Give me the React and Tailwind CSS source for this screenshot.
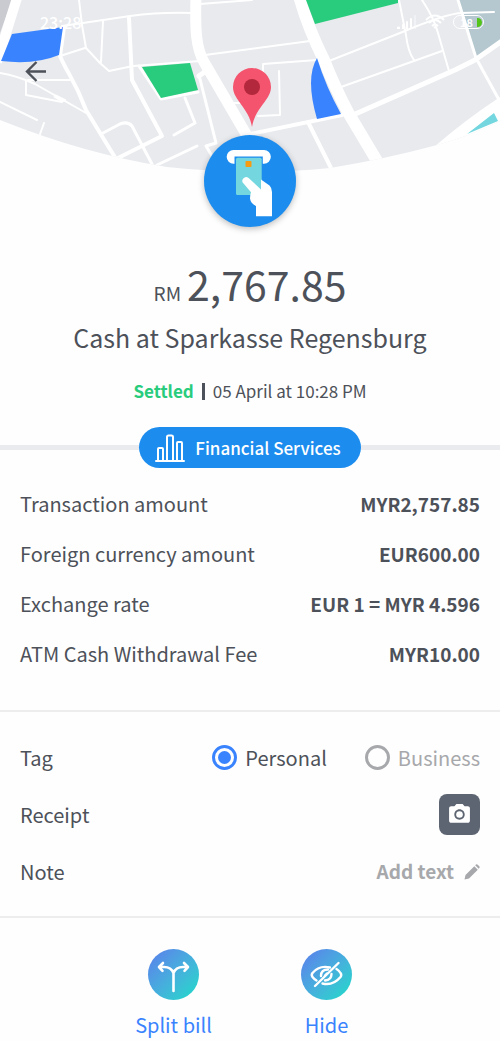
import { MdPhotoCamera } from "react-icons/md";

const details = [
  ["Transaction amount", "MYR2,757.85"],
  ["Foreign currency amount", "EUR600.00"],
  ["Exchange rate", "EUR 1 = MYR 4.596"],
  ["ATM Cash Withdrawal Fee", "MYR10.00"],
];

function MapBackdrop() {
  return (
    <svg viewBox="0 0 500 175" preserveAspectRatio="xMidYMin slice" className="absolute inset-x-0 top-0 h-[175px] w-full" aria-hidden="true">
      <defs>
        <clipPath id="mapEdge">
          <path d="M0 0H500V121Q470 136 437 145Q385 159 330 168Q250 176 167 167Q85 154 0 120Z" />
        </clipPath>
      </defs>
      <g clipPath="url(#mapEdge)">
        <path d="M0 0H500V175H0Z" fill="#e8eaee" />
        <path d="M0 0H12L0 33Z" fill="#c9cbd0" />
        <path d="M458 0H500V42L476 58Z" fill="#b5c7cf" />
        <g fill="none" stroke="#fff" strokeLinejoin="round" strokeLinecap="round">
          <path d="M17 -2L7 30L-3 62" strokeWidth="10" strokeLinecap="butt" />
          <g strokeWidth="2">
            <path d="M79 0L82 25L86 48L100 63L109 71L133 66L200 61" />
            <path d="M62 26L83 23L130 16Q160 12 192 13" />
            <path d="M103 21L101 62" />
            <path d="M60 56L85 48" />
            <path d="M0 73Q18 76 35 84L86 113" />
            <path d="M26 81V95L62 102M28 80L70 80" />
            <path d="M0 102L37 120M44 123L39 137" />
            <path d="M200 4L252 0M205 55L310 41" />
            <path d="M232 103H245M317 60L263 64V82M279 71L280 115L258 116" />
            <path d="M399 0L406 35Q408 52 414 60" />
            <path d="M422 0Q434 18 438 33L449 71" />
            <path d="M329 61L400 33Q445 14 461 13L494 12M341 87L442 51" />
          </g>
          <g strokeWidth="3">
            <path d="M103 133L120 124Q128 121 132 126L153 166M157 165L197 146" />
            <path d="M139 66L161 99L198 92M185 98L195 123L174 135" />
            <path d="M199 75L216 143L206 146L212 156" />
            <path d="M458 0L476 58L498 98" />
          </g>
          <path d="M54 97L62 102L66 100L56 95Z" fill="#fff" strokeWidth="1" />
          <path d="M129 18L132 80L162 136L116 159" strokeWidth="4" />
          <path d="M64 27L60 56C68 75 74 78 86 110L116 159" strokeWidth="4" />
          <path d="M250 134L342 115M309 124L332 170" strokeWidth="4" />
          <path d="M353 115L455 70L475 60L502 41" strokeWidth="5" />
          <path d="M196 -4C195 30 196 48 204 62L246 134" strokeWidth="11" />
          <path d="M199 76L206 71" strokeWidth="5" />
          <path d="M299 -4Q308 28 324 60Q336 90 349 114L380 166" strokeWidth="12" />
        </g>
        <path d="M12 34L63 27L59 55Q35 65 1 61Z" fill="#3a83ff" />
        <path d="M142 67L190 63L198 90L161 98Z" fill="#28cc7c" />
        <path d="M306 0H398V3L315 24Z" fill="#28cc7c" />
        <path d="M317 58Q326 87 341 114L317 119Q305 78 317 58Z" fill="#3a83ff" />
        <path d="M434 147Q465 120 500 97V122L437 152Z" fill="#fff" />
        <path d="M467 134L494 113L498 121Z" fill="#74d7df" />
      </g>
      <path d="M252 127C249 108 233 100 233 87A19 19 0 0 1 271 87C271 100 255 108 252 127Z" fill="#f4546d" />
      <circle cx="252" cy="87" r="8" fill="#b3283c" />
    </svg>
  );
}

function AtmIcon() {
  return (
    <svg viewBox="0 0 92 92" className="size-[92px]" aria-hidden="true">
      <path d="M29.5 15H60A6.8 6.8 0 0 1 60 28.7H29.5A6.8 6.8 0 0 1 29.5 15Z" fill="#fff" />
      <path d="M30.5 21.5H58.8V29H30.5Z" fill="#1c8def" />
      <rect x="32" y="22.7" width="25.7" height="37.3" rx="1.5" fill="#74d7df" />
      <rect x="41.5" y="26" width="6" height="6" rx="0.8" fill="#f79b13" />
      <path d="M39.8 48.8A3.7 3.7 0 0 1 44.6 43L57 54.5V44.5L65.5 50.5Q68 53 68 57V81.3H52V71Q46.5 68 46 63.5Q46 60 47 57.3Z" fill="#fff" />
    </svg>
  );
}

function BarsIcon() {
  return (
    <svg viewBox="0 0 30 30" className="h-[30px] w-[30px]" fill="none" stroke="#fff" strokeWidth="2" strokeLinecap="round" strokeLinejoin="round" aria-hidden="true">
      <path d="M1 28H29M3 28V16Q3 15 4 15H7Q8 15 8 16V28M12 28V4Q12 2.500 13.500 2.500H16.500Q18 2.500 18 4V28M22 28V10Q22 9 23 9H26Q27 9 27 10V28" />
    </svg>
  );
}

function SplitIcon() {
  return (
    <svg viewBox="0 0 51 51" className="size-[51px]" fill="none" stroke="#fff" strokeWidth="2.6" strokeLinecap="round" strokeLinejoin="round" aria-hidden="true">
      <path d="M25.500 42V24C24 20 20.500 18 16 18H11.500M25.500 24C27 20 30.500 18 35 18H39.500M15 14L11 18L14.500 21.800M36 14L40 18L36.500 21.800" />
    </svg>
  );
}

function HideIcon() {
  return (
    <svg viewBox="0 0 51 51" className="size-[51px]" fill="none" stroke="#fff" strokeWidth="2.4" strokeLinecap="round" strokeLinejoin="round" aria-hidden="true">
      <path d="M14 37L37.500 14" />
      <path d="M29 18.500Q18 16 11.500 24Q10 26 11.500 28Q13 30 15.500 31.500M35.500 20Q38 21.500 39.500 24Q41 26 39.500 28Q32 37 21.500 34.500" />
      <path d="M27 20.500Q20 20.500 20 27M24 31.500Q30.500 31 30.500 25M26 24.500L24 26.500" />
    </svg>
  );
}

function PencilIcon() {
  return (
    <svg viewBox="0 0 16 16" className="size-4" fill="currentColor" aria-hidden="true">
      <path d="M0.500 15.500L1.500 11L10.300 2.200L13.800 5.700L5 14.500ZM11.200 1.300L12 0.600Q12.900 0 13.700 0.700L15.300 2.300Q16 3.100 15.400 4L14.700 4.800Z" />
    </svg>
  );
}

function StatusBar() {
  return (
    <div className="relative flex h-[44px] items-center justify-between pr-4 pl-10 text-white">
      <span className="text-[16px] leading-5 font-medium">23:28</span>
      <div className="flex items-center gap-2">
        <svg viewBox="0 0 20 14" className="h-[14px] w-[20px]" fill="#fff" aria-hidden="true">
          <path d="M0 12.500Q0 11.500 1.500 11.500T3 12.500V14H0ZM5 10Q5 9 6 9T7 10V14H5ZM9 7Q9 6 10 6T11 7V14H9ZM13 4Q13 3 14 3T15 4V14H13Z" />
          <path d="M17 1Q17 0 18 0T19 1V14H17Z" opacity="0.4" />
        </svg>
        <svg viewBox="0 0 20 16" className="h-[16px] w-[20px]" fill="none" stroke="#fff" strokeWidth="2" aria-hidden="true">
          <path d="M1 6Q10 -3 19 6M4 9Q10 3 16 9M7 12Q10 9 13 12" />
          <path d="M10 15L8 12.500H12Z" fill="#fff" stroke="none" />
        </svg>
        <span className="flex h-[14px] w-[31px] items-center justify-end gap-1 rounded-full border border-white pr-px text-[11px] leading-3 font-bold">
          18
          <span className="h-[9px] w-[5px] rounded-r-full bg-[#52c41a]" />
        </span>
      </div>
    </div>
  );
}

export default function App() {
  return (
    <main className="min-h-screen w-full bg-[#fefefe] font-['Noto_Sans_CJK_SC','Noto_Sans',sans-serif] text-[#4d5159]">
      <header className="relative">
        <MapBackdrop />
        <StatusBar />
        <div className="relative h-[91px] px-[22px] pt-[14px]">
          <button type="button" aria-label="Back" className="flex size-7 items-center justify-center">
            <svg viewBox="0 0 24 22" className="h-[22px] w-[24px]" fill="none" stroke="#4d5159" strokeWidth="2.4" aria-hidden="true">
              <path d="M22 10.500H3M12.500 1L3 10.500L12.500 20" />
            </svg>
          </button>
        </div>
        <div className="relative mx-auto size-[92px] rounded-full bg-[#1c8def] shadow-[0_2px_6px_rgba(0,0,0,0.25)]">
          <AtmIcon />
        </div>
      </header>

      <section className="flex flex-col items-center pt-[27px] text-center">
        <p className="flex h-[62px] items-baseline gap-1.5 leading-[58px]">
          <span className="text-[19px]">RM</span>
          <span className="text-[41px]">2,767.85</span>
        </p>
        <h1 className="text-[25px] leading-[42px]">Cash at Sparkasse Regensburg</h1>
        <p className="mt-5 flex items-center gap-2 text-[17px] leading-[26px]">
          <strong className="font-bold text-[#28cc7c]">Settled</strong>
          <span className="h-[17px] w-[3px] bg-[#4d5159]" />
          <span>05 April at 10:28 PM</span>
        </p>
      </section>

      <div className="mt-[23px] flex items-center">
        <span className="h-[5px] flex-1 bg-[#e9ebef]" />
        <span className="flex h-[41px] items-center gap-2.5 rounded-full bg-[#1c8def] pr-5 pl-4 text-[17px] font-medium text-white">
          <BarsIcon />
          Financial Services
        </span>
        <span className="h-[5px] flex-1 bg-[#e9ebef]" />
      </div>

      <dl className="border-b-2 border-[#ededee] px-5 pt-[11px] pb-[31px]">
        {details.map(([label, value]) => (
          <div key={label} className="flex h-[50px] items-center justify-between">
            <dt className="text-[20px]">{label}</dt>
            <dd className="text-[19px] font-bold">{value}</dd>
          </div>
        ))}
      </dl>

      <section className="border-b-2 border-[#ededee] px-5 pt-[17px] pb-[16px] text-[20px]">
        <fieldset className="flex h-[57px] items-center">
          <legend className="float-left mr-auto">Tag</legend>
          <label className="flex items-center gap-2">
            <input type="radio" name="tag" defaultChecked className="size-[25px] appearance-none rounded-full border-[3px] border-[#3a83ff] bg-clip-content p-[3px] checked:bg-[#3a83ff]" />
            Personal
          </label>
          <label className="ml-[38px] flex items-center gap-2 text-[#a7a8ab]">
            <input type="radio" name="tag" className="size-[25px] appearance-none rounded-full border-[3px] border-[#a7a8ab] bg-clip-content p-[3px] checked:bg-[#a7a8ab]" />
            Business
          </label>
        </fieldset>
        <div className="flex h-[57px] items-center justify-between">
          <span>Receipt</span>
          <button type="button" aria-label="Add receipt photo" className="flex size-[41px] items-center justify-center rounded-lg bg-[#5e6572] text-white">
            <MdPhotoCamera size={25} />
          </button>
        </div>
        <div className="flex h-[57px] items-center justify-between">
          <span>Note</span>
          <button type="button" className="flex items-center gap-2.5 text-[19px] font-bold text-[#a7a8ab]">
            Add text
            <PencilIcon />
          </button>
        </div>
      </section>

      <nav className="flex justify-center gap-[51px] pt-[31px] text-[20px] text-[#3a83ff]">
        <button type="button" className="flex w-[102px] flex-col items-center">
          <span className="rounded-full bg-linear-135 from-[#5a7bec] to-[#0fdcc8]">
            <SplitIcon />
          </span>
          <span className="mt-[11px] leading-7">Split bill</span>
        </button>
        <button type="button" className="flex w-[102px] flex-col items-center">
          <span className="rounded-full bg-linear-135 from-[#5a7bec] to-[#0fdcc8]">
            <HideIcon />
          </span>
          <span className="mt-[11px] leading-7">Hide</span>
        </button>
      </nav>
    </main>
  );
}
